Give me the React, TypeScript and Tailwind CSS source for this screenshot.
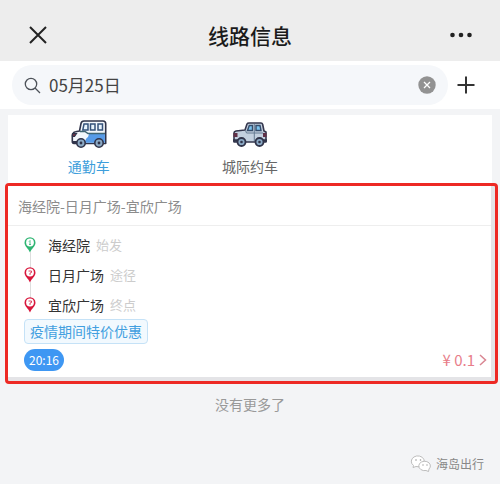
import React from "react";

interface Stop {
	name: string;
	kind: string;
	mark: string;
	color: string;
}

const stops: Stop[] = [
	{ name: "海经院", kind: "始发", mark: "1", color: "#2fb573" },
	{ name: "日月广场", kind: "途径", mark: "?", color: "#d8173c" },
	{ name: "宜欣广场", kind: "终点", mark: "?", color: "#d8173c" },
];

const BusIcon: React.FC = () => (
	<svg width="36" height="28" viewBox="0 0 36 28" aria-hidden="true">
		<path
			d="M2 13.500Q2.500 12 4.500 11.700L8.500 11 10 3.500Q10.500 1 13 1H32Q34.700 1 34.700 3.700V23.500H3Q1.300 23.500 1.300 21.500V15Z"
			fill="#f3f7fc"
			stroke="#30344a"
			strokeWidth="1.600"
			strokeLinejoin="round"
		/>
		<path d="M18 14H33.900V22.700H14Q14 19 17 17Z" fill="#579be8" />
		<path d="M9 11.500H14L17 13.500H34" fill="none" stroke="#3f6472" strokeWidth="1.500" />
		<path
			d="M13 4H17V10H11.800ZM19.500 4H24V10H19.500ZM27 4H31.500V10H27Z"
			fill="#e8f3fc"
			stroke="#35527a"
			strokeWidth="1.500"
		/>
		<path d="M1.500 13.500H5.500L3.500 16.500H1.500Z" fill="#713145" stroke="#30344a" strokeWidth="1.200" />
		<path d="M1 22H6" stroke="#30344a" strokeWidth="2" />
		<circle cx="10" cy="23" r="4.200" fill="#8caac5" stroke="#30344a" strokeWidth="1.600" />
		<circle cx="28" cy="23" r="4.200" fill="#8caac5" stroke="#30344a" strokeWidth="1.600" />
		<circle cx="10" cy="23" r="1.400" fill="#30344a" />
		<circle cx="28" cy="23" r="1.400" fill="#30344a" />
	</svg>
);

const CarIcon: React.FC = () => (
	<svg width="36" height="28" viewBox="0 0 36 28" aria-hidden="true">
		<path
			d="M2 13Q2 11.500 4 11L13 10 15 4Q15.500 3 17 3H29Q30.300 3 30.700 4.500L32 11 34 12V22H2Z"
			fill="#c3d0df"
			stroke="#35374d"
			strokeWidth="1.600"
			strokeLinejoin="round"
		/>
		<path
			d="M15.500 10.500 17.300 5.500H20.500V10.500ZM24 5.500H28L29 10.500H24Z"
			fill="#7cc4ef"
			stroke="#354d6c"
			strokeWidth="1.400"
		/>
		<path d="M13.500 10.500 14.500 13H31M22.300 4V21" fill="none" stroke="#667b92" strokeWidth="1" />
		<path d="M1.500 13H5.500V17H1.500ZM31 13H34.500V17H31Z" fill="#613147" />
		<path d="M1 20.500H6M31 20.500H35" stroke="#30344a" strokeWidth="2.500" />
		<circle cx="9.500" cy="22" r="4" fill="#8caac5" stroke="#30344a" strokeWidth="1.800" />
		<circle cx="27.500" cy="22" r="4" fill="#8caac5" stroke="#30344a" strokeWidth="1.800" />
		<circle cx="9.500" cy="22" r="1.300" fill="#30344a" />
		<circle cx="27.500" cy="22" r="1.300" fill="#30344a" />
	</svg>
);

const Pin: React.FC<{ color: string; mark: string }> = ({ color, mark }) => (
	<svg width="12" height="16" viewBox="0 0 12 16" aria-hidden="true">
		<path
			d="M6 15.500C4.500 11.500 .5 9.500 .5 5.700A5.500 5.500 0 0 1 11.500 5.700C11.500 9.500 7.500 11.500 6 15.500Z"
			fill={color}
		/>
		<circle cx="6" cy="5.500" r="3.900" fill="#fff" />
		{mark === "1" ? (
			<path d="M5 4.500 6 3.500V7.500M5 7.500H7" fill="none" stroke={color} strokeWidth="0.800" />
		) : (
			<path d="M4.500 4H7.500V5.500L6 6V8" fill="none" stroke={color} strokeWidth="0.800" />
		)}
	</svg>
);

const App: React.FC = () => {
	return (
		<div className="flex flex-col min-h-screen bg-[#f3f4f6] border-b-2 border-white font-['Noto_Sans_CJK_SC','Noto_Sans',sans-serif] text-sm text-[#333]">
			<header className="grid grid-cols-3 items-center h-[61px] px-7 pt-2 bg-[#ededed]">
				<button type="button" aria-label="关闭" className="justify-self-start">
					<svg width="20" height="20" viewBox="0 0 20 20">
						<path d="M2 2 18 18M18 2 2 18" stroke="#222" strokeWidth="2" />
					</svg>
				</button>
				<h1 className="text-[21px] leading-6 font-medium text-center text-[#1b1b1b]">
					线路信息
				</h1>
				<button type="button" aria-label="更多" className="justify-self-end">
					<svg width="22" height="8" viewBox="0 0 22 8">
						<g fill="#222">
							<circle cx="2.500" cy="4" r="2.300" />
							<circle cx="11" cy="4" r="2.300" />
							<circle cx="19.500" cy="4" r="2.300" />
						</g>
					</svg>
				</button>
			</header>

			<div className="flex items-center gap-2 h-12 pl-3 pr-6 bg-white">
				<div className="flex items-center flex-1 min-w-0 gap-2 h-10 px-3 rounded-full bg-[#f5f7fa]">
					<svg width="17" height="17" viewBox="0 0 17 17" aria-hidden="true">
						<g fill="none" stroke="#4d5259" strokeWidth="1.300">
							<circle cx="7" cy="7" r="5.700" />
							<path d="M11 11 16 16" />
						</g>
					</svg>
					<input
						type="text"
						aria-label="日期"
						defaultValue="05月25日"
						className="flex-1 min-w-0 text-[17px] leading-6 text-[#444] bg-transparent outline-none"
					/>
					<button type="button" aria-label="清除">
						<svg width="18" height="18" viewBox="0 0 18 18">
							<circle cx="9" cy="9" r="8.700" fill="#929292" />
							<path d="M6 6 12 12M12 6 6 12" stroke="#fff" strokeWidth="1.300" />
						</svg>
					</button>
				</div>
				<button type="button" aria-label="添加">
					<svg width="20" height="20" viewBox="0 0 20 20">
						<path d="M10 1.500V18.500M1.500 10H18.500" stroke="#333" strokeWidth="2" />
					</svg>
				</button>
			</div>

			<nav className="grid grid-cols-3 h-[68px] mt-[6px] mx-2 bg-white">
				<button type="button" className="flex flex-col items-center gap-2 pt-[5px] text-[#3d9edb]">
					<BusIcon />
					<span className="leading-5">通勤车</span>
				</button>
				<button type="button" className="flex flex-col items-center gap-2 pt-[5px] text-[#666]">
					<CarIcon />
					<span className="leading-5">城际约车</span>
				</button>
			</nav>

			<main className="ml-[5px] mr-[2px] pr-1 pb-1 border-3 border-[#ed2924] rounded-sm bg-[#e4e4e7]">
				<article className="bg-white">
					<h2 className="px-[10px] h-10 leading-10 text-[#8c8c8c] border-b border-[#eee]">
						海经院-日月广场-宜欣广场
					</h2>
					<ol className="pl-4 pt-1">
						{stops.map((stop, i) => (
							<li key={stop.name} className="flex items-center h-[30px]">
								<div className="relative flex items-center w-6 h-full">
									{i < stops.length - 1 && (
										<span className="absolute left-[6px] top-[22px] w-px h-4 bg-[#ddd]" />
									)}
									<Pin color={stop.color} mark={stop.mark} />
								</div>
								<span>{stop.name}</span>
								<span className="ml-[6px] text-[13px] text-[#ccc]">{stop.kind}</span>
							</li>
						))}
					</ol>
					<p className="-mt-px ml-4 w-fit px-[5px] h-[25px] leading-[23px] text-[#429fe0] bg-[#f2f9fe] border border-[#c5e2f7] rounded">
						疫情期间特价优惠
					</p>
					<div className="flex items-center justify-between mt-1 pb-[5px] pl-4 pr-1">
						<time className="px-[5px] h-[22px] leading-[22px] rounded-full bg-[#3e97f3] text-xs text-white">
							20:16
						</time>
						<a href="#order" className="flex items-center gap-1 text-[15px] leading-6 text-[#e87d89]">
							¥ 0.1
							<svg width="8" height="12" viewBox="0 0 8 12" aria-hidden="true">
								<path d="M1 1 6.500 6 1 11" fill="none" stroke="#d98692" strokeWidth="1.500" />
							</svg>
						</a>
					</div>
				</article>
			</main>

			<p className="mt-2 text-center leading-6 text-[#999]">没有更多了</p>

			<footer className="flex items-center justify-end gap-1 mt-auto mr-4 mb-2 text-xs leading-6 text-[#888]">
				<svg width="22" height="18" viewBox="0 0 22 18" aria-hidden="true">
					<g fill="#fff" stroke="#b5b5b5" strokeWidth="0.900">
						<path d="M3 12.500 3.500 10.500A6.500 5.500 0 1 1 9 11.800L6 11.500Z" />
						<path d="M18.500 16.500 16 15.500A5.800 4.700 0 1 1 19 14Z" />
					</g>
					<g fill="#999">
						<circle cx="6" cy="5" r="0.800" />
						<circle cx="10.500" cy="5" r="0.800" />
						<circle cx="13" cy="10" r="0.700" />
						<circle cx="17" cy="10" r="0.700" />
					</g>
				</svg>
				<span>海岛出行</span>
			</footer>
		</div>
	);
};

export default App;
